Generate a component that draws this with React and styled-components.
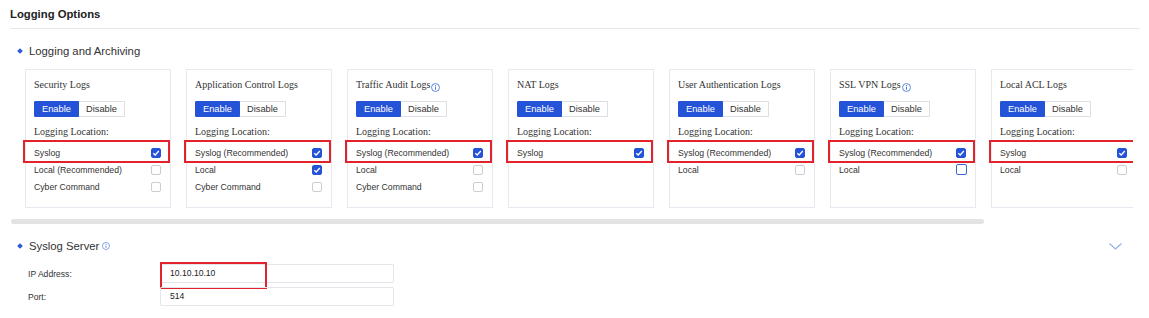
import React from "react";
import styled, { createGlobalStyle, css } from "styled-components";

const Global = createGlobalStyle`
  html, body { margin: 0; padding: 0; background: #fff; }
  body { font-family: "Liberation Sans", Arial, sans-serif; color: #333; }
  * { box-sizing: border-box; }
`;

const Page = styled.div`
  width: 1149px;
  height: 318px;
  padding: 0 9px 0 10px;
  overflow: hidden;
`;

const Header = styled.div`
  height: 29px;
  line-height: 28px;
  border-bottom: 1px solid #e4e7ed;
  font-size: 11.3px;
  font-weight: bold;
  color: #222;
`;

const SectionTitle = styled.div`
  display: flex;
  align-items: center;
  justify-content: space-between;
  height: 20px;
  margin-top: ${(p) => p.$top}px;
  padding-left: 7px;
  padding-right: 18px;
  font-size: 11.3px;
  color: #333;
`;

const TitleLeft = styled.div`
  display: flex;
  align-items: center;
`;

const Bullet = styled.span`
  width: 4px;
  height: 4px;
  background: #2b5ad8;
  transform: rotate(45deg);
  margin-left: 1px;
  margin-right: 7px;
`;

const CardScroller = styled.div`
  display: flex;
  gap: 15px;
  margin-top: 8px;
  margin-right: 7px;
  padding-left: 15px;
  overflow: hidden;
`;

const Card = styled.div`
  flex: none;
  width: 146px;
  height: 139px;
  border: 1px solid #e6e9ef;
  padding: 8px 9px 0 8px;
`;

const CardTitle = styled.div`
  display: flex;
  align-items: center;
  height: 14px;
  line-height: 14px;
  font-family: "Liberation Serif", "Times New Roman", serif;
  font-size: 10px;
  color: #333;
`;

const ButtonGroup = styled.div`
  display: flex;
  margin-top: 9px;
  height: 16px;
`;

const ToggleButton = styled.div`
  height: 16px;
  line-height: 14px;
  padding: 0 7px;
  font-size: 9.3px;
  border: 1px solid #dcdfe6;
  background: #fff;
  color: #333;
  ${(p) =>
    p.$active &&
    css`
      background: #2553d8;
      border-color: #2553d8;
      color: #fff;
    `}
  &:first-child { border-radius: 1px 0 0 1px; }
  &:last-child { border-left: none; border-radius: 0 1px 1px 0; }
`;

const LocationLabel = styled.div`
  margin-top: 8px;
  height: 14px;
  line-height: 14px;
  font-family: "Liberation Serif", "Times New Roman", serif;
  font-size: 10px;
  color: #333;
`;

const Rows = styled.div`
  margin-top: 5px;
  display: flex;
  flex-direction: column;
`;

const Row = styled.div`
  position: relative;
  display: flex;
  align-items: center;
  justify-content: space-between;
  height: 17px;
  font-size: 8.7px;
  color: #333;
  ${(p) =>
    p.$highlight &&
    css`
      &::after {
        content: "";
        position: absolute;
        left: -11px;
        right: -9px;
        top: -4px;
        bottom: -2px;
        border: 2px solid #e3232c;
        pointer-events: none;
      }
    `}
`;

const Box = styled.span`
  display: inline-flex;
  align-items: center;
  justify-content: center;
  width: 10px;
  height: 10px;
  border-radius: 2px;
  border: 1px solid #c9cdd4;
  background: #fff;
  ${(p) =>
    p.$checked &&
    css`
      background: #2553d8;
      border-color: #2553d8;
    `}
  ${(p) =>
    p.$focus &&
    css`
      width: 11px;
      height: 11px;
      border-color: #3b66d9;
      margin-right: -1px;
    `}
`;

const Scrollbar = styled.div`
  margin-top: 11px;
  margin-left: 1px;
  width: 973px;
  height: 5px;
  border-radius: 3px;
  background: #e3e3e3;
`;

const FormRows = styled.div`
  margin-top: 8px;
  display: flex;
  flex-direction: column;
  gap: 4px;
`;

const FormRow = styled.div`
  display: flex;
  align-items: center;
  height: 19px;
`;

const FormLabel = styled.div`
  width: 150px;
  padding-left: 18px;
  font-size: 8.6px;
  color: #333;
`;

const InputWrap = styled.div`
  position: relative;
  ${(p) =>
    p.$highlight &&
    css`
      &::after {
        content: "";
        position: absolute;
        left: 0;
        top: -2px;
        width: 103px;
        height: 23px;
        border: 2px solid #e3232c;
        pointer-events: none;
      }
    `}
`;

const Input = styled.div`
  width: 234px;
  height: 19px;
  line-height: 17px;
  border: 1px solid #e3e6ea;
  border-radius: 1px;
  padding-left: 9px;
  font-size: 8.6px;
  color: #222;
`;

const InfoSvg = styled.svg`
  margin-left: ${(p) => p.$ml || 1}px;
  margin-top: ${(p) => p.$mt || 0}px;
`;

const Info = ({ size = 9, ml, mt, color = "#3b6fd8" }) => (
  <InfoSvg $ml={ml} $mt={mt} width={size} height={size} viewBox="0 0 10 10">
    <circle cx="5" cy="5" r="4.4" fill="none" stroke={color} strokeWidth="0.9" />
    <circle cx="5" cy="2.9" r="0.65" fill={color} />
    <line x1="5" y1="4.2" x2="5" y2="7.6" stroke={color} strokeWidth="1" />
  </InfoSvg>
);

const Check = () => (
  <svg width="8" height="8" viewBox="0 0 8 8">
    <polyline points="1.3,4.2 3.2,6 6.8,2" fill="none" stroke="#fff" strokeWidth="1.3" />
  </svg>
);

const cards = [
  {
    title: "Security Logs",
    rows: [
      { label: "Syslog", checked: true, hl: true },
      { label: "Local (Recommended)" },
      { label: "Cyber Command" },
    ],
  },
  {
    title: "Application Control Logs",
    rows: [
      { label: "Syslog (Recommended)", checked: true, hl: true },
      { label: "Local", checked: true },
      { label: "Cyber Command" },
    ],
  },
  {
    title: "Traffic Audit Logs",
    info: true,
    rows: [
      { label: "Syslog (Recommended)", checked: true, hl: true },
      { label: "Local" },
      { label: "Cyber Command" },
    ],
  },
  {
    title: "NAT Logs",
    rows: [{ label: "Syslog", checked: true, hl: true }],
  },
  {
    title: "User Authentication Logs",
    rows: [
      { label: "Syslog (Recommended)", checked: true, hl: true },
      { label: "Local" },
    ],
  },
  {
    title: "SSL VPN Logs",
    info: true,
    rows: [
      { label: "Syslog (Recommended)", checked: true, hl: true },
      { label: "Local", focus: true },
    ],
  },
  {
    title: "Local ACL Logs",
    rows: [
      { label: "Syslog", checked: true, hl: true },
      { label: "Local" },
    ],
  },
];

const Chevron = () => (
  <svg width="13" height="7" viewBox="0 0 13 7">
    <polyline points="0.5,0.5 6.5,6 12.5,0.5" fill="none" stroke="#8fb0e2" strokeWidth="1.1" />
  </svg>
);

export default function App() {
  return (
    <>
      <Global />
      <Page>
        <Header>Logging Options</Header>
        <SectionTitle $top={12}>
          <TitleLeft>
            <Bullet />
            Logging and Archiving
          </TitleLeft>
        </SectionTitle>
        <CardScroller>
          {cards.map((c) => (
            <Card key={c.title}>
              <CardTitle>
                {c.title}
                {c.info && <Info size={9} ml={1} mt={4} />}
              </CardTitle>
              <ButtonGroup>
                <ToggleButton $active>Enable</ToggleButton>
                <ToggleButton>Disable</ToggleButton>
              </ButtonGroup>
              <LocationLabel>Logging Location:</LocationLabel>
              <Rows>
                {c.rows.map((r) => (
                  <Row key={r.label} $highlight={r.hl}>
                    <span>{r.label}</span>
                    <Box $checked={r.checked} $focus={r.focus}>
                      {r.checked && <Check />}
                    </Box>
                  </Row>
                ))}
              </Rows>
            </Card>
          ))}
        </CardScroller>
        <Scrollbar />
        <SectionTitle $top={12}>
          <TitleLeft>
            <Bullet />
            Syslog Server
            <Info size={8} ml={3} color="#5b85dc" />
          </TitleLeft>
          <Chevron />
        </SectionTitle>
        <FormRows>
          <FormRow>
            <FormLabel>IP Address:</FormLabel>
            <InputWrap $highlight>
              <Input>10.10.10.10</Input>
            </InputWrap>
          </FormRow>
          <FormRow>
            <FormLabel>Port:</FormLabel>
            <InputWrap>
              <Input>514</Input>
            </InputWrap>
          </FormRow>
        </FormRows>
      </Page>
    </>
  );
}
